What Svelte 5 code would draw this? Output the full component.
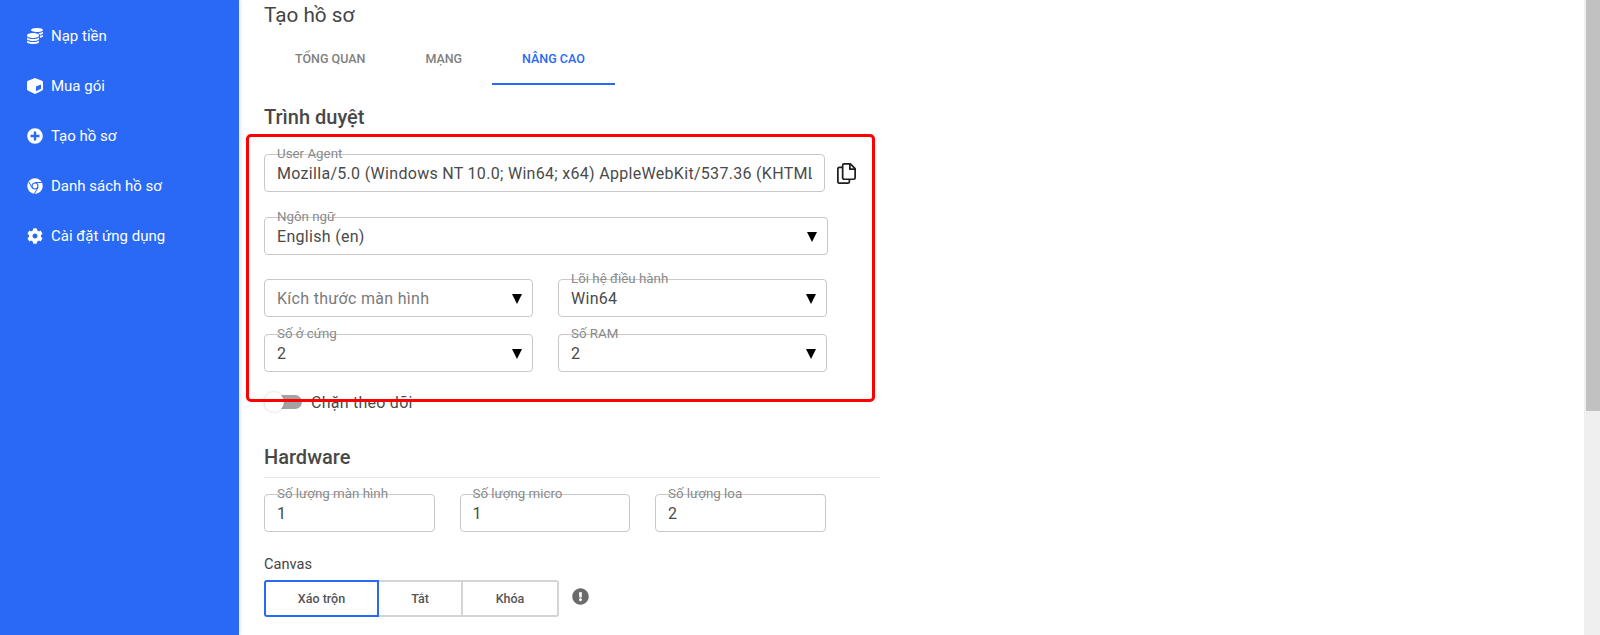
<script lang="ts">
	const nav = [
		{ label: 'Nạp tiền', icon: 'coins' },
		{ label: 'Mua gói', icon: 'cube' },
		{ label: 'Tạo hồ sơ', icon: 'plus' },
		{ label: 'Danh sách hồ sơ', icon: 'chrome' },
		{ label: 'Cài đặt ứng dụng', icon: 'cog' }
	];
	const paths: Record<string, string> = {
		coins:
			'M0 405.3V448c0 35.3 86 64 192 64s192-28.7 192-64v-42.7C342.7 434.4 267.2 448 192 448S41.3 434.4 0 405.3zM320 128c106 0 192-28.7 192-64S426 0 320 0 128 28.7 128 64s86 64 192 64zM0 300.4V352c0 35.3 86 64 192 64s192-28.7 192-64v-51.6c-41.3 34-116.9 51.6-192 51.6S41.3 334.4 0 300.4zm416 11c57.3-11.1 96-31.7 96-55.4v-42.7c-23.2 16.4-57.3 27.6-96 34.5v63.6zM192 160C86 160 0 195.8 0 240s86 80 192 80 192-35.8 192-80-86-80-192-80zm219.3 56.3c60-10.8 100.7-32 100.7-56.3v-42.7c-35.5 25.1-96.5 38.6-160.7 41.8 29.5 14.3 51.2 33.5 60 57.2z',
		cube: 'M239.1 6.3l-208 78c-18.7 7-31.1 25-31.1 45v225.1c0 18.2 10.3 34.8 26.5 42.9l208 104c13.5 6.8 29.4 6.8 42.9 0l208-104c16.3-8.1 26.5-24.8 26.5-42.9V129.3c0-20-12.4-37.9-31.1-44.9l-208-78C262 2.2 250 2.2 239.1 6.3zM288 424.4V275.5l160-65v133.9l-160 80z',
		plus: 'M256 8C119 8 8 119 8 256s111 248 248 248 248-111 248-248S393 8 256 8zm144 276c0 6.6-5.4 12-12 12h-92v92c0 6.6-5.4 12-12 12h-56c-6.6 0-12-5.4-12-12v-92h-92c-6.6 0-12-5.4-12-12v-56c0-6.6 5.4-12 12-12h92v-92c0-6.6 5.4-12 12-12h56c6.6 0 12 5.4 12 12v92h92c6.6 0 12 5.4 12 12v56z',
		cog: 'M487.4 315.7l-42.6-24.6c4.3-23.2 4.3-47 0-70.2l42.6-24.6c4.9-2.8 7.1-8.6 5.5-14-11.1-35.6-30-67.8-54.7-94.6-3.8-4.1-10-5.1-14.8-2.3L380.8 110c-17.9-15.4-38.5-27.3-60.8-35.1V25.8c0-5.6-3.9-10.5-9.4-11.7-36.7-8.2-74.3-7.8-109.2 0-5.5 1.2-9.4 6.1-9.4 11.7V75c-22.2 7.9-42.8 19.8-60.8 35.1L88.7 85.5c-4.9-2.8-11-1.9-14.8 2.3-24.7 26.7-43.6 58.9-54.7 94.6-1.7 5.4.6 11.2 5.5 14L67.3 221c-4.3 23.2-4.3 47 0 70.2l-42.6 24.6c-4.9 2.8-7.1 8.6-5.5 14 11.1 35.6 30 67.8 54.7 94.6 3.8 4.1 10 5.1 14.8 2.3l42.6-24.6c17.9 15.4 38.5 27.3 60.8 35.1v49.2c0 5.6 3.9 10.5 9.4 11.7 36.7 8.2 74.3 7.8 109.2 0 5.5-1.2 9.4-6.1 9.4-11.7v-49.2c22.2-7.9 42.8-19.8 60.8-35.1l42.6 24.6c4.9 2.8 11 1.9 14.8-2.3 24.7-26.7 43.6-58.9 54.7-94.6 1.5-5.5-.7-11.3-5.6-14.1zM256 336c-44.1 0-80-35.9-80-80s35.9-80 80-80 80 35.9 80 80-35.9 80-80 80z'
	};
	const tabs = ['Tổng quan', 'Mạng', 'Nâng cao'];
	const userAgent = 'Mozilla/5.0 (Windows NT 10.0; Win64; x64) AppleWebKit/537.36 (KHTML, like Gecko)';
</script>

<div class="page">
	<aside class="sidebar">
		{#each nav as item}
			<div class="nav-item">
				<svg class="nav-icon" viewBox="0 0 512 512" fill="#fff">
					{#if item.icon === 'chrome'}
						<circle cx="256" cy="256" r="248" />
						<circle cx="256" cy="256" r="95" fill="none" stroke="#2969f6" stroke-width="36" />
						<path d="M256 143 H470 M158 312 L62 128 M352 312 L236 500" fill="none" stroke="#2969f6" stroke-width="32" />
					{:else}
						<path d={paths[item.icon]} />
					{/if}
				</svg>
				<span>{item.label}</span>
			</div>
		{/each}
	</aside>

	<main class="content">
		<h2 class="page-title">Tạo hồ sơ</h2>

		<div class="tabs">
			{#each tabs as tab, i}
				<div class="tab" class:active={i === 2}>{tab}</div>
			{/each}
		</div>

		<h3 class="section browser">Trình duyệt</h3>

		<div class="row ua-row">
			<div class="field ua">
				<span class="legend">User Agent</span>
				<input class="value ua-input" readonly value={userAgent} />
			</div>
			<svg class="copy" viewBox="0 0 24 24" fill="none" stroke="#1d1d1d" stroke-width="1.8" stroke-linejoin="round">
				<path d="M8 5.5H4.5a1.5 1.5 0 0 0-1.5 1.5v13.5A1.5 1.5 0 0 0 4.5 22h9a1.5 1.5 0 0 0 1.5-1.5V18" />
				<path d="M8 3.5A1.5 1.5 0 0 1 9.5 2H16l5 5v9.5a1.5 1.5 0 0 1-1.5 1.5h-10A1.5 1.5 0 0 1 8 16.5z" />
				<path d="M15.5 2v5.5H21" />
			</svg>
		</div>

		<div class="field lang">
			<span class="legend">Ngôn ngữ</span>
			<span class="value">English (en)</span>
			<span class="caret"></span>
		</div>

		<div class="grid-2 first">
			<div class="field">
				<span class="value muted">Kích thước màn hình</span>
				<span class="caret"></span>
			</div>
			<div class="field">
				<span class="legend">Lõi hệ điều hành</span>
				<span class="value">Win64</span>
				<span class="caret"></span>
			</div>
		</div>
		<div class="grid-2 second">
			<div class="field">
				<span class="legend">Số ở cứng</span>
				<span class="value">2</span>
				<span class="caret"></span>
			</div>
			<div class="field">
				<span class="legend">Số RAM</span>
				<span class="value">2</span>
				<span class="caret"></span>
			</div>
		</div>

		<div class="toggle-row">
			<span class="toggle"><span class="knob"></span></span>
			<span class="toggle-label">Chặn theo dõi</span>
		</div>

		<h3 class="section hardware">Hardware</h3>

		<div class="grid-3">
			<div class="field">
				<span class="legend">Số lượng màn hình</span>
				<span class="value">1</span>
			</div>
			<div class="field">
				<span class="legend">Số lượng micro</span>
				<span class="value">1</span>
			</div>
			<div class="field">
				<span class="legend">Số lượng loa</span>
				<span class="value">2</span>
			</div>
		</div>

		<div class="canvas-label">Canvas</div>
		<div class="canvas-row">
			<div class="btn-group">
				<button class="on">Xáo trộn</button>
				<button class="mid">Tắt</button>
				<button class="last">Khóa</button>
			</div>
			<svg class="info" viewBox="0 0 512 512" fill="#6b6b6b">
				<path d="M504 256c0 137-111 248-248 248S8 393 8 256 119 8 256 8s248 111 248 248zm-248 50c-25.4 0-46 20.6-46 46s20.6 46 46 46 46-20.6 46-46-20.6-46-46-46zm-43.7-165.3l7.4 136c.3 6.4 5.6 11.3 12 11.3h48.5c6.4 0 11.6-5 12-11.3l7.4-136c.4-6.9-5.1-12.7-12-12.7h-63.4c-6.9 0-12.4 5.8-12 12.7z" />
			</svg>
		</div>
	</main>

	<div class="scrollbar"><div class="thumb"></div></div>

	<!-- annotation drawn over the screenshot -->
	<div class="highlight"></div>
</div>

<style>
	:global(body) {
		margin: 0;
		overflow: hidden;
		background: #fff;
	}

	.page {
		position: relative;
		display: flex;
		height: 635px;
		overflow: hidden;
		font-family: Roboto, 'Liberation Sans', sans-serif;
		color: #3d3d3d;
	}

	.sidebar {
		width: 239px;
		flex: none;
		background: #2969f6;
		padding-top: 11px;
		box-sizing: border-box;
		box-shadow: 1px 0 4px rgba(0, 0, 0, 0.12);
	}

	.nav-item {
		display: flex;
		align-items: center;
		height: 50px;
		padding-left: 27px;
		color: #fff;
		font-size: 15px;
		font-weight: 400;
	}

	.nav-icon {
		width: 16px;
		height: 16px;
		margin-right: 8px;
	}

	.content {
		flex: 1;
		padding: 0 0 0 25px;
		min-width: 0;
	}

	.page-title {
		margin: 2px 0 0;
		font-size: 20.7px;
		line-height: 26px;
		font-weight: 400;
		color: #444;
	}

	.tabs {
		display: flex;
		margin: 11px 0 0 1px;
		height: 46px;
	}

	.tab {
		padding: 0 30px;
		font-size: 12.5px;
		font-weight: 500;
		line-height: 40px;
		text-transform: uppercase;
		color: #808080;
		box-sizing: border-box;
		border-bottom: 2px solid transparent;
	}

	.tab.active {
		color: #2969f6;
		border-bottom-color: #2969f6;
	}

	.section {
		margin: 0;
		font-size: 20px;
		font-weight: 500;
		line-height: 26px;
		color: #484848;
	}

	.browser {
		margin-top: 19px;
	}

	.row {
		display: flex;
		align-items: center;
	}

	.ua-row {
		margin-top: 24px;
	}

	.field {
		position: relative;
		height: 38px;
		box-sizing: border-box;
		border: 1px solid #c8c8c8;
		border-radius: 4px;
		display: flex;
		align-items: center;
		padding: 0 12px;
	}

	.ua {
		width: 561px;
	}

	.lang {
		width: 564px;
		margin-top: 25px;
	}

	.legend {
		position: absolute;
		left: 12px;
		top: -9px;
		font-size: 13.33px;
		line-height: 16px;
		color: #8a8a8a;
	}

	.value {
		font-size: 16px;
		line-height: 20px;
		color: #4a4a4a;
		margin-top: 2px;
		letter-spacing: 0.3px;
	}

	.ua-input {
		flex: 1;
		min-width: 0;
		padding: 0;
		border: none;
		outline: none;
		background: transparent;
		font-family: inherit;
	}

	.muted {
		color: #7a7a7a;
	}

	.caret {
		position: absolute;
		right: 10px;
		top: 14px;
		width: 0;
		height: 0;
		border-left: 5px solid transparent;
		border-right: 5px solid transparent;
		border-top: 10px solid #000;
	}

	.copy {
		width: 23px;
		height: 23px;
		margin-left: 10px;
	}

	.grid-2 {
		display: grid;
		grid-template-columns: 269px 269px;
		column-gap: 25px;
	}

	.first {
		margin-top: 24px;
	}

	.second {
		margin-top: 17px;
	}

	.toggle-row {
		display: flex;
		align-items: center;
		margin-top: 20px;
		height: 20px;
	}

	.toggle {
		position: relative;
		width: 38px;
		height: 14px;
		background: #a3a3a3;
		border-radius: 7px;
	}

	.knob {
		position: absolute;
		left: 0;
		top: -3px;
		width: 20px;
		height: 20px;
		background: #fff;
		border-radius: 50%;
		box-shadow: 0 0 3px rgba(0, 0, 0, 0.2);
	}

	.toggle-label {
		margin-left: 9px;
		font-size: 16px;
		letter-spacing: 0.25px;
		color: #4a4a4a;
	}

	.hardware {
		margin-top: 32px;
		padding-bottom: 7px;
		width: 616px;
		border-bottom: 1px solid #e5e5e5;
	}

	.grid-3 {
		display: grid;
		grid-template-columns: repeat(3, 170.5px);
		column-gap: 25px;
		margin-top: 16px;
	}

	.canvas-label {
		margin-top: 23px;
		font-size: 14.6px;
		line-height: 18px;
		color: #444;
	}

	.canvas-row {
		display: flex;
		align-items: center;
		margin-top: 7px;
	}

	.btn-group {
		display: flex;
		height: 37px;
	}

	button {
		font-family: inherit;
		font-size: 12.5px;
		font-weight: 500;
		color: #555;
		background: #fff;
		border: 2px solid #d4d4d4;
		padding: 0;
		box-sizing: border-box;
	}

	.on {
		width: 115px;
		border-color: #2969f6;
		border-radius: 3px 0 0 3px;
	}

	.mid {
		width: 84px;
		border-left: none;
	}

	.last {
		width: 96px;
		border-left: none;
		border-radius: 0 3px 3px 0;
	}

	.info {
		width: 17px;
		height: 17px;
		margin: -4px 0 0 13px;
	}

	.scrollbar {
		width: 16px;
		flex: none;
		background: #efefef;
		padding-left: 2px;
		box-sizing: border-box;
	}

	.thumb {
		height: 411px;
		background: #c1c1c1;
	}

	.highlight {
		position: absolute;
		left: 246px;
		top: 134px;
		width: 629px;
		height: 268px;
		box-sizing: border-box;
		border: 3px solid #f00;
		border-radius: 5px;
		pointer-events: none;
	}
</style>
